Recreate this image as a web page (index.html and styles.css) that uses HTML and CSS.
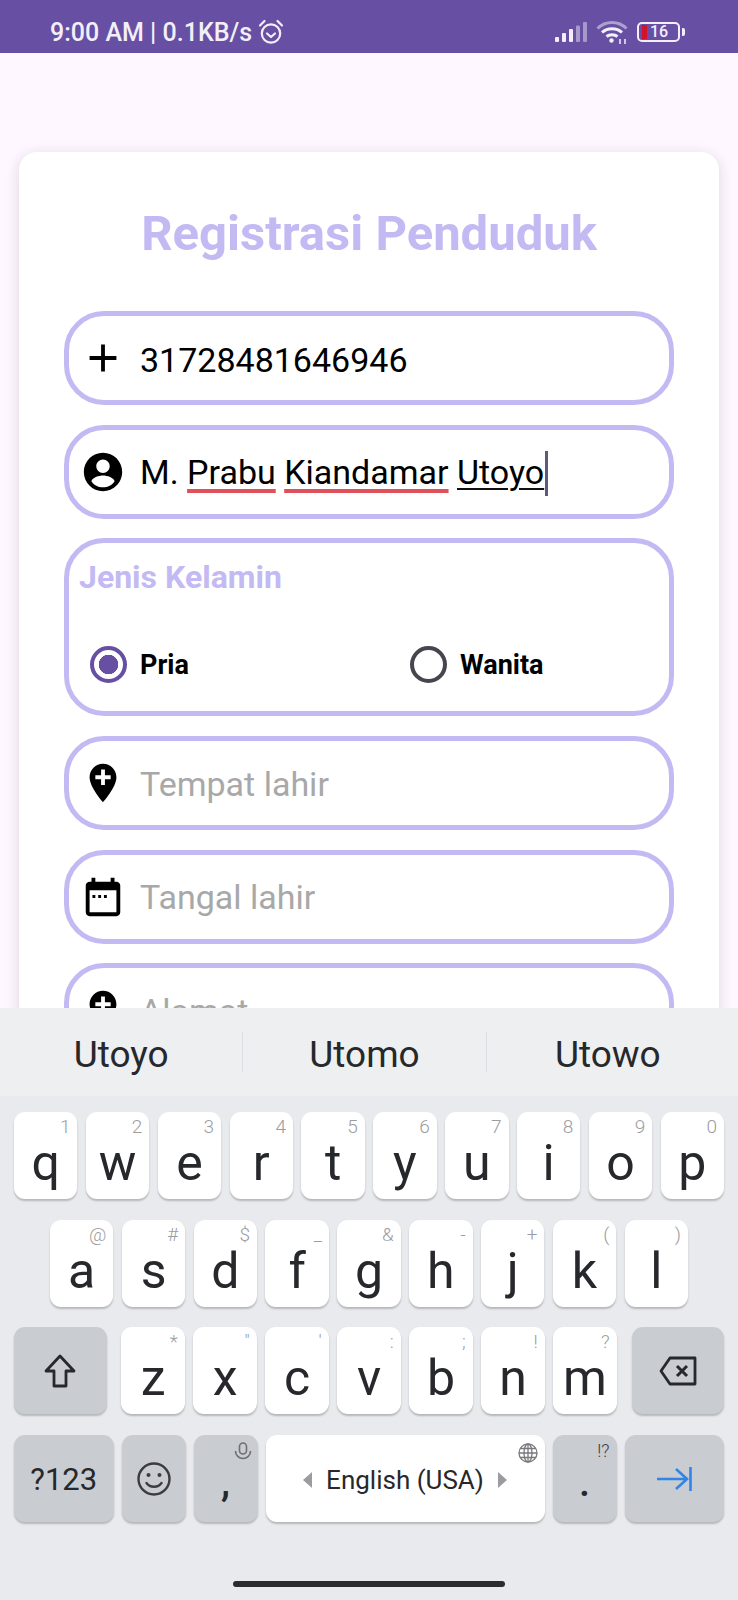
FILE: index.html
```html
<!DOCTYPE html>
<html>
<head>
  <title>Registrasi Penduduk</title>
  <link rel="stylesheet" href="styles.css">
</head>
<body>

  <header class="status-bar">
    <div class="status-left">
      <span>9:00 AM | 0.1KB/s</span>
      <svg class="alarm" viewBox="0 0 26 26" fill="none" stroke="currentColor" stroke-width="2.2">
        <circle cx="13" cy="14.5" r="9.2"/>
        <path d="M9 14.5l4 3.5 4-3.5" stroke-linecap="round" stroke-linejoin="round"/>
        <path d="M2 6.5L6.5 2M24 6.5L19.500 2" stroke-linecap="round"/>
      </svg>
    </div>
    <div class="status-right">
      <svg class="signal" viewBox="0 0 32 20" fill="currentColor">
        <rect x="0" y="15" width="4" height="5" rx="1"/>
        <rect x="7" y="11" width="4" height="9" rx="1"/>
        <rect x="14" y="7" width="4" height="13" rx="1"/>
        <rect x="21" y="3.500" width="4" height="16.500" rx="1" opacity=".45"/>
        <rect x="28" y="0" width="4" height="20" rx="1" opacity=".45"/>
      </svg>
      <svg class="wifi" viewBox="0 0 32 24" fill="none" stroke="currentColor" stroke-width="3">
        <path d="M1.500 8.500C9.500 .5 22.500 .5 30.500 8.500" opacity=".5"/>
        <path d="M6 12.500c5.500-5 14.500-5 20 0"/>
        <path d="M10.500 16.500c3-2.500 8-2.500 11 0"/>
        <circle cx="15.500" cy="20.500" r="2.200" fill="currentColor" stroke="none"/>
        <path d="M24 24v-5M29 24v-5" stroke-width="1.500"/>
      </svg>
      <div class="battery">
        <div class="battery-box"><i class="battery-level"></i><span>16</span></div>
        <i class="battery-nub"></i>
      </div>
    </div>
  </header>

  <main class="app">
    <section class="card">
      <h1 class="title">Registrasi Penduduk</h1>

      <div class="field">
        <svg class="field-icon" viewBox="0 0 24 24"><path d="M19 13h-6v6h-2v-6H5v-2h6V5h2v6h6v2z"/></svg>
        <span class="field-text">31728481646946</span>
      </div>

      <div class="field">
        <svg class="field-icon" viewBox="0 0 24 24"><path d="M12 2C6.480 2 2 6.480 2 12s4.480 10 10 10 10-4.480 10-10S17.520 2 12 2zm0 3.500c1.930 0 3.500 1.570 3.500 3.500s-1.570 3.500-3.500 3.500S8.500 10.930 8.500 9 10.070 5.500 12 5.500zM12 20c-2.500 0-4.700-1.200-6-3.100.030-2 4-3.100 6-3.100s5.970 1.100 6 3.100C16.700 18.800 14.500 20 12 20z"/></svg>
        <span class="field-text">M. <span class="typo">Prabu</span> <span class="typo">Kiandamar</span> <span class="composing">Utoyo</span><i class="caret"></i></span>
      </div>

      <div class="field-group">
        <div class="group-label">Jenis Kelamin</div>
        <div class="radio-row">
          <label class="radio-item">
            <i class="radio radio-on"></i>
            <span>Pria</span>
          </label>
          <label class="radio-item">
            <i class="radio"></i>
            <span>Wanita</span>
          </label>
        </div>
      </div>

      <div class="field">
        <svg class="field-icon" viewBox="0 0 24 24"><path d="M12 2C8.140 2 5 5.140 5 9c0 5.250 7 13 7 13s7-7.750 7-13c0-3.860-3.140-7-7-7zm4 8h-3v3h-2v-3H8V8h3V5h2v3h3v2z"/></svg>
        <span class="field-text placeholder">Tempat lahir</span>
      </div>

      <div class="field">
        <svg class="field-icon" viewBox="0 0 24 24"><path d="M19 4h-1V2h-2v2H8V2H6v2H5c-1.110 0-2 .9-2 2v14c0 1.100.9 2 2 2h14c1.100 0 2-.9 2-2V6c0-1.100-.9-2-2-2zm0 16H5V8.500h14V20zM8 11H6.500v1.500H8V11zm3 0H9.500v1.500H11V11zm3 0h-1.500v1.500H14V11z"/></svg>
        <span class="field-text placeholder">Tangal lahir</span>
      </div>

      <div class="field">
        <svg class="field-icon" viewBox="0 0 24 24"><path d="M12 2C8.140 2 5 5.140 5 9c0 5.250 7 13 7 13s7-7.750 7-13c0-3.860-3.140-7-7-7zm4 8h-3v3h-2v-3H8V8h3V5h2v3h3v2z"/></svg>
        <span class="field-text placeholder">Alamat</span>
      </div>
    </section>
  </main>

  <section class="keyboard">
    <div class="suggestions">
      <div class="suggestion">Utoyo</div>
      <div class="suggestion">Utomo</div>
      <div class="suggestion">Utowo</div>
    </div>

    <div class="keys">
      <div class="key-row">
        <div class="key" data-hint="1">q</div>
        <div class="key" data-hint="2">w</div>
        <div class="key" data-hint="3">e</div>
        <div class="key" data-hint="4">r</div>
        <div class="key" data-hint="5">t</div>
        <div class="key" data-hint="6">y</div>
        <div class="key" data-hint="7">u</div>
        <div class="key" data-hint="8">i</div>
        <div class="key" data-hint="9">o</div>
        <div class="key" data-hint="0">p</div>
      </div>

      <div class="key-row key-row-home">
        <div class="key" data-hint="@">a</div>
        <div class="key" data-hint="#">s</div>
        <div class="key" data-hint="$">d</div>
        <div class="key" data-hint="_">f</div>
        <div class="key" data-hint="&amp;">g</div>
        <div class="key" data-hint="-">h</div>
        <div class="key" data-hint="+">j</div>
        <div class="key" data-hint="(">k</div>
        <div class="key" data-hint=")">l</div>
      </div>

      <div class="key-row key-row-shift">
        <div class="key key-func key-wide">
          <svg class="shift-icon" viewBox="0 0 32 34" fill="none" stroke="#26282b" stroke-width="2.800" stroke-linejoin="round"><path d="M16 2L2 17h8v15h12V17h8z"/></svg>
        </div>
        <div class="letter-group">
          <div class="key" data-hint="*">z</div>
          <div class="key" data-hint="&quot;">x</div>
          <div class="key" data-hint="'">c</div>
          <div class="key" data-hint=":">v</div>
          <div class="key" data-hint=";">b</div>
          <div class="key" data-hint="!">n</div>
          <div class="key" data-hint="?">m</div>
        </div>
        <div class="key key-func key-wide">
          <svg class="back-icon" viewBox="0 0 38 30" fill="none" stroke="#26282b" stroke-width="2.800" stroke-linejoin="round"><path d="M11 2h25v26H11L2 15z"/><path d="M18 10l10 10M28 10L18 20" stroke-width="3"/></svg>
        </div>
      </div>

      <div class="key-row key-row-bottom">
        <div class="key key-func key-mode key-symbols">?123</div>
        <div class="key key-func key-small">
          <svg class="emoji-icon" viewBox="0 0 34 34" fill="none" stroke="#3a3c3f" stroke-width="2.400"><circle cx="17" cy="17" r="15.500"/><circle cx="11.500" cy="13" r="2" fill="#3a3c3f" stroke="none"/><circle cx="22.500" cy="13" r="2" fill="#3a3c3f" stroke="none"/><path d="M9.500 21c3.500 5 11.500 5 15 0" stroke-linecap="round"/></svg>
        </div>
        <div class="key key-func key-small key-punct">
          ,
          <svg class="mic-icon" viewBox="0 0 18 18" fill="none" stroke="#6d6f73" stroke-width="1.600"><rect x="5.500" y="1" width="7" height="11" rx="3.500"/><path d="M1.500 9c0 4.500 3.500 7.500 7.500 7.500s7.500-3 7.500-7.500"/></svg>
        </div>
        <div class="key key-space">
          <i class="arrow arrow-left"></i>
          <span>English (USA)</span>
          <i class="arrow arrow-right"></i>
          <svg class="globe-icon" viewBox="0 0 20 20" fill="none" stroke="#77797d" stroke-width="1.300"><circle cx="10" cy="10" r="9"/><ellipse cx="10" cy="10" rx="4" ry="9"/><path d="M1 10h18M2.200 5.500h15.600M2.200 14.500h15.600M10 1v18"/></svg>
        </div>
        <div class="key key-func key-small key-punct" data-hint="!?">.</div>
        <div class="key key-func key-mode">
          <svg class="enter-icon" viewBox="0 0 35 24" fill="none" stroke="#2f85e8" stroke-width="2.600"><path d="M0 12h30M19 2l11 10-11 10"/><path d="M33.500 0v24"/></svg>
        </div>
      </div>
    </div>

    <div class="home-bar"></div>
  </section>

</body>
</html>
```

FILE: styles.css
```css
* {
  box-sizing: border-box;
}

html,
body {
  margin: 0;
  padding: 0;
}

body {
  width: 738px;
  height: 1600px;
  display: flex;
  flex-direction: column;
  overflow: hidden;
  font-family: Roboto, "Liberation Sans", sans-serif;
  background-color: #fef7ff;
}

/* status bar */
.status-bar {
  height: 53px;
  flex: none;
  display: flex;
  align-items: center;
  justify-content: space-between;
  padding: 11px 53px 0 50px;
  background-color: #6750a4;
  color: #f3eff9;
}

.status-left {
  display: flex;
  align-items: center;
  gap: 6px;
  font-size: 25px;
  font-weight: 500;
}

.status-right {
  display: flex;
  align-items: center;
  gap: 9px;
}

.alarm {
  width: 26px;
  height: 26px;
}

.signal {
  width: 32px;
  height: 20px;
}

.wifi {
  width: 32px;
  height: 24px;
}

.battery {
  display: flex;
  align-items: center;
  gap: 2px;
}

.battery-box {
  width: 43px;
  height: 20px;
  display: flex;
  align-items: center;
  gap: 3px;
  padding-left: 3px;
  border: 2px solid #f3eff9;
  border-radius: 5px;
  font-size: 16px;
  font-weight: 500;
  line-height: 16px;
}

.battery-level {
  width: 5px;
  height: 14px;
  background-color: #d3122e;
}

.battery-nub {
  width: 3px;
  height: 8px;
  border-radius: 0 2px 2px 0;
  background-color: #f3eff9;
}

/* form */
.app {
  height: 955px;
  flex: none;
  overflow: hidden;
  padding: 99px 19px 0;
}

.card {
  height: 1100px;
  padding: 53px 45px 0;
  background-color: #fff;
  border-radius: 18px;
  box-shadow: 0 3px 14px rgba(60, 30, 70, 0.16);
}

.title {
  height: 106px;
  margin: 0;
  color: #c3b9f3;
  font-size: 49px;
  font-weight: 700;
  line-height: 58px;
  text-align: center;
}

.field {
  height: 94px;
  display: flex;
  align-items: center;
  margin-bottom: 19.5px;
  padding-left: 11px;
  border: 5px solid #c3b9f3;
  border-radius: 40px;
}

.field-icon {
  width: 46px;
  height: 46px;
  flex: none;
  fill: #000;
}

.field-text {
  margin-left: 14px;
  padding-top: 3px;
  color: #000;
  font-size: 34px;
  line-height: 44px;
  white-space: nowrap;
}

.placeholder {
  padding-top: 1px;
  color: #a8a8a8;
}

.typo {
  text-decoration: underline #e0505a 4px;
  text-underline-offset: 5px;
}

.composing {
  text-decoration: underline #111 2px;
  text-underline-offset: 4px;
}

.caret {
  display: inline-block;
  width: 3px;
  height: 45px;
  margin-left: 1px;
  vertical-align: -12px;
  background-color: #5f5a7c;
}

.field-group {
  height: 178px;
  margin-bottom: 20px;
  padding: 13px 10px 0;
  border: 5px solid #c3b9f3;
  border-radius: 40px;
}

.group-label {
  height: 90px;
  color: #c3b9f3;
  font-size: 32px;
  font-weight: 700;
  line-height: 42px;
}

.radio-row {
  display: flex;
  padding-left: 11px;
}

.radio-item {
  width: 320px;
  flex: none;
  display: flex;
  align-items: center;
  gap: 13px;
  color: #000;
  font-size: 27px;
  font-weight: 700;
}

.radio {
  width: 37px;
  height: 37px;
  flex: none;
  border: 4px solid #49454f;
  border-radius: 50%;
}

.radio-on {
  border-color: #6750a4;
  background: radial-gradient(circle, #6750a4 9.5px, transparent 10px);
}

/* keyboard */
.keyboard {
  height: 592px;
  flex: none;
  position: relative;
  background-color: #e8eaed;
}

.suggestions {
  height: 88px;
  display: flex;
  align-items: center;
  padding-right: 9px;
  background-color: #eeeff1;
}

.suggestion {
  flex: 1;
  height: 40px;
  border-left: 1px solid #dcdee1;
  color: #26282b;
  font-size: 37px;
  line-height: 46px;
  text-align: center;
}

.suggestion:first-child {
  border-left: none;
}

.keys {
  display: flex;
  flex-direction: column;
  gap: 20.7px;
  padding: 16px 14px 0;
}

.key-row {
  height: 87px;
  display: flex;
  gap: 8.4px;
}

.key-row-home {
  padding: 0 36px;
}

.key-row-shift {
  justify-content: space-between;
}

.key-row-bottom {
  gap: 8px;
}

.letter-group {
  display: flex;
  gap: 8.4px;
}

.key {
  position: relative;
  flex: 1;
  display: flex;
  align-items: flex-start;
  justify-content: center;
  background-color: #fff;
  border-radius: 11px;
  box-shadow: 0 2px 2px rgba(0, 0, 0, 0.22);
  color: #26282b;
  font-size: 50px;
  line-height: 50px;
  padding-top: 26px;
}

.key[data-hint]::after {
  content: attr(data-hint);
  position: absolute;
  top: 3px;
  right: 7px;
  color: #9b9da1;
  font-size: 19px;
  font-weight: 300;
  line-height: 24px;
}

.letter-group .key {
  width: 63.6px;
  flex: none;
}

.key-func {
  background-color: #c9ccd0;
  align-items: center;
  padding-top: 0;
}

.key-wide {
  width: 92.5px;
  flex: none;
}

.key-mode {
  width: 99.5px;
  flex: none;
  font-size: 31px;
}

.key-symbols {
  padding-top: 3px;
}

.key-small {
  width: 64px;
  flex: none;
}

.key-punct {
  align-items: flex-start;
  padding-top: 23px;
  font-size: 40px;
  font-weight: 500;
}

.key-punct[data-hint]::after {
  top: 4px;
  color: #3a3c3f;
  font-size: 18px;
}

.key-space {
  width: 279px;
  flex: none;
  align-items: center;
  gap: 14px;
  padding-top: 2px;
  font-size: 26px;
}

.arrow {
  width: 0;
  height: 0;
  border-top: 8px solid transparent;
  border-bottom: 8px solid transparent;
}

.arrow-left {
  border-right: 9px solid #9a9c9f;
}

.arrow-right {
  border-left: 9px solid #9a9c9f;
}

.globe-icon {
  position: absolute;
  top: 8px;
  right: 7px;
  width: 20px;
  height: 20px;
}

.mic-icon {
  position: absolute;
  top: 7px;
  right: 6px;
  width: 18px;
  height: 18px;
}

.shift-icon {
  width: 32px;
  height: 34px;
}

.back-icon {
  width: 38px;
  height: 30px;
}

.emoji-icon {
  width: 34px;
  height: 34px;
}

.enter-icon {
  width: 35px;
  height: 24px;
}

.home-bar {
  width: 272px;
  height: 6px;
  margin: 59px 0 0 233px;
  border-radius: 3px;
  background-color: #2b2c2e;
}
```
